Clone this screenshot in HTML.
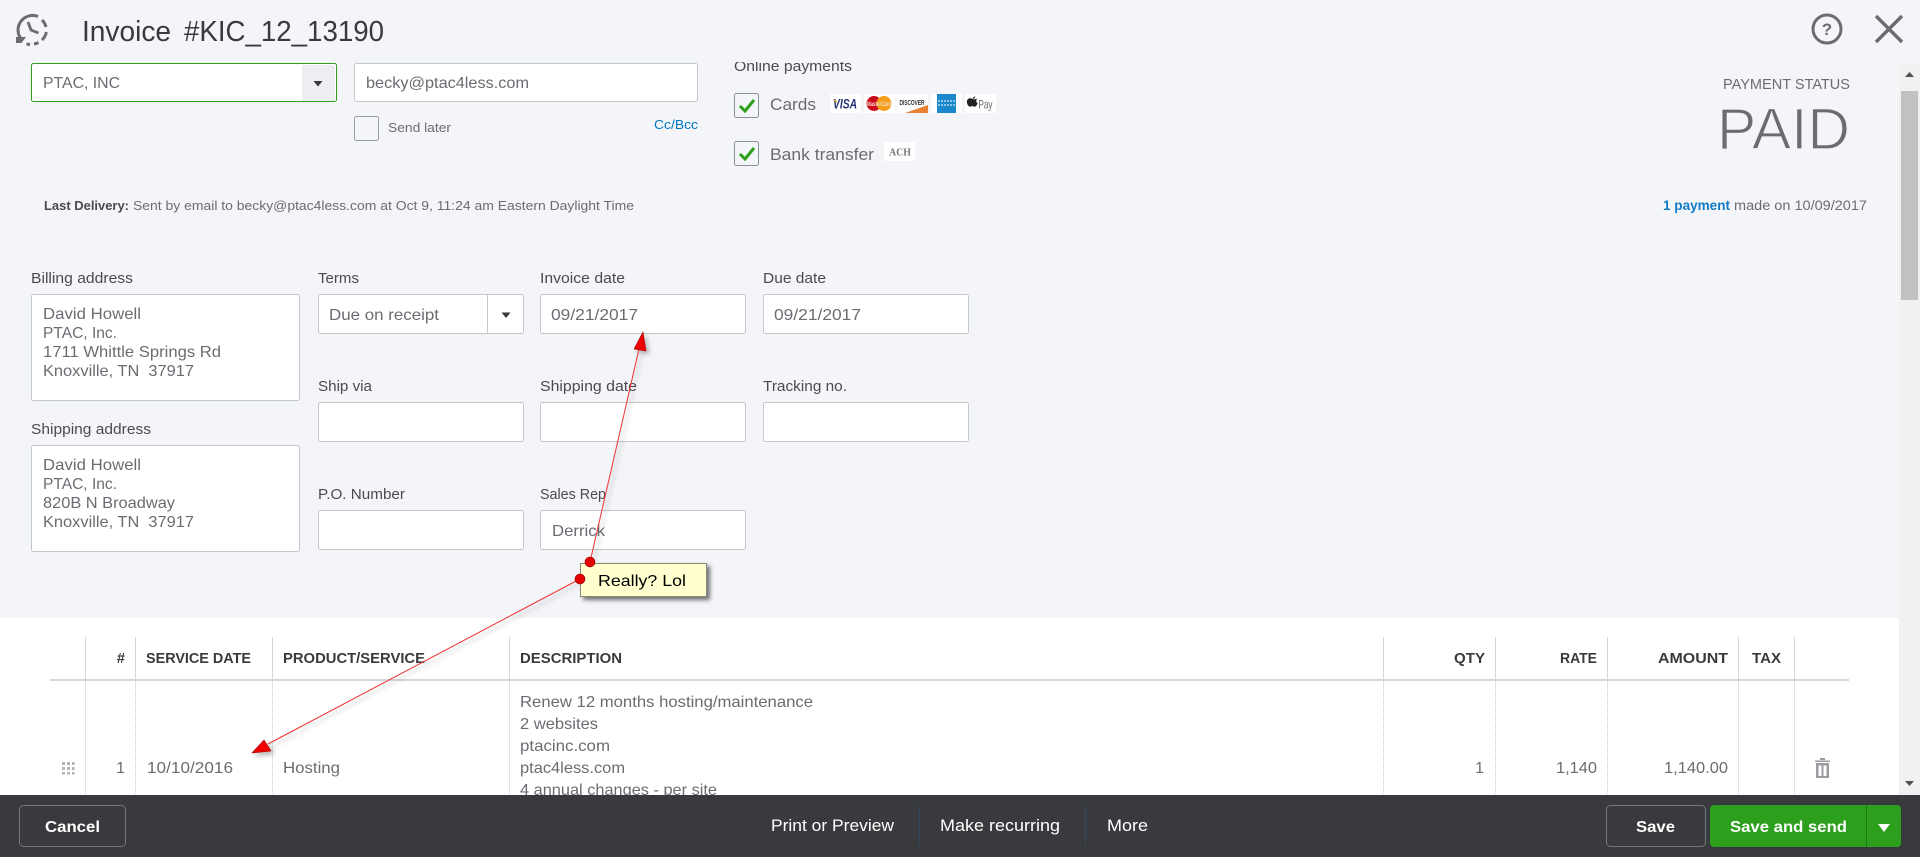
<!DOCTYPE html>
<html>
<head>
<meta charset="utf-8">
<title>Invoice</title>
<style>
html,body{margin:0;padding:0;width:1920px;height:857px;overflow:hidden;background:#f4f5f8}
svg{display:block}
text{font-family:"Liberation Sans",sans-serif;fill:#6b6c72;font-size:16px}
.l{fill:#4a4b50;font-size:14.5px}
.h{fill:#393a3d;font-size:14.5px;font-weight:bold}
.v{fill:#6b6c72;font-size:16px}
.box{fill:#fff;stroke:#c4c7cc;stroke-width:1}
</style>
</head>
<body>
<svg width="1920" height="857" viewBox="0 0 1920 857" xmlns="http://www.w3.org/2000/svg">
<defs>
<filter id="sh" x="-30%" y="-30%" width="170%" height="170%"><feDropShadow dx="3" dy="3" stdDeviation="2" flood-color="#000" flood-opacity=".55"/></filter>
<filter id="sl" x="-20%" y="-20%" width="140%" height="140%"><feDropShadow dx="3" dy="3" stdDeviation="2.5" flood-color="#000" flood-opacity=".28"/></filter>
</defs>
<rect width="1920" height="857" fill="#f4f5f8"/>

<!-- online payments (clipped by header) -->
<text x="734" y="71" style="font-size:15px;fill:#4a4b50" textLength="118" lengthAdjust="spacingAndGlyphs">Online payments</text>
<rect x="0" y="0" width="1920" height="62" fill="#f4f5f8"/>

<!-- header -->
<g fill="none" stroke="#6b6c72" stroke-width="3">
<path d="M20.5 38A14.5 14.5 0 0 1 38 16.5"/>
<path d="M42 20A14.5 14.5 0 0 1 46 27"/>
<path d="M46.300 32A14.500 14.500 0 0 1 42 40"/>
<path d="M38.500 42.500A14.500 14.500 0 0 1 34 44"/>
<path d="M30 44.500L26.500 44"/>
<path d="M28 22L31 30L38.500 33" stroke-width="2.800"/>
</g>
<path d="M16 37H26L21.500 43H16Z" fill="#6b6c72"/>
<text x="82" y="41" style="font-size:29px;fill:#393a3d" textLength="89" lengthAdjust="spacingAndGlyphs">Invoice</text>
<text x="184" y="41" style="font-size:29px;fill:#393a3d" textLength="200" lengthAdjust="spacingAndGlyphs">#KIC_12_13190</text>
<circle cx="1827" cy="29" r="14" fill="none" stroke="#6b6c72" stroke-width="3"/>
<text x="1827" y="35" text-anchor="middle" style="font-size:17px;font-weight:bold;fill:#6b6c72">?</text>
<path d="M1876 16L1902 42M1902 16L1876 42" stroke="#6b6c72" stroke-width="3.400" fill="none"/>

<!-- customer -->
<rect x="31.500" y="63.500" width="305" height="38" rx="2" fill="#fff" stroke="#2ca01c"/>
<rect x="302" y="65" width="33" height="36" fill="#eceef1"/>
<path d="M313.500 81H322.500L318 86.500Z" fill="#393a3d"/>
<text x="43" y="88" class="v" textLength="77" lengthAdjust="spacingAndGlyphs">PTAC, INC</text>
<rect x="354.500" y="63.500" width="343" height="38" rx="2" class="box"/>
<text x="366" y="88" class="v" textLength="163" lengthAdjust="spacingAndGlyphs">becky@ptac4less.com</text>
<rect x="354.500" y="116.500" width="24" height="24" rx="2" fill="#f4f5f8" stroke="#9a9da3"/>
<text x="388" y="132" style="font-size:13px" textLength="63" lengthAdjust="spacingAndGlyphs">Send later</text>
<text x="654" y="129" style="font-size:13px;fill:#0077c5" textLength="44" lengthAdjust="spacingAndGlyphs">Cc/Bcc</text>

<!-- payment options -->
<rect x="734.500" y="93.500" width="24" height="24" rx="2" fill="#f4f5f8" stroke="#8d9096"/>
<path d="M740 106L745 111L754 100" fill="none" stroke="#2ca01c" stroke-width="3"/>
<text x="770" y="110" style="font-size:17px" textLength="46" lengthAdjust="spacingAndGlyphs">Cards</text>
<rect x="734.500" y="141.500" width="24" height="24" rx="2" fill="#f4f5f8" stroke="#8d9096"/>
<path d="M740 154L745 159L754 148" fill="none" stroke="#2ca01c" stroke-width="3"/>
<text x="770" y="160" style="font-size:17px" textLength="104" lengthAdjust="spacingAndGlyphs">Bank transfer</text>

<!-- cards -->
<rect x="830" y="94" width="31" height="19" fill="#fff"/>
<text x="833" y="108.500" style="font-size:13.500px;font-weight:bold;font-style:italic;fill:#26337a" textLength="24" lengthAdjust="spacingAndGlyphs">VISA</text>
<path d="M833 100H836L837 103Z" fill="#e8a020"/>
<rect x="864" y="94" width="31" height="19" fill="#fff"/>
<circle cx="874" cy="103.500" r="7.500" fill="#cc0a1e"/><circle cx="884" cy="103.500" r="7.500" fill="#f79e1b"/>
<text x="867" y="106" style="font-size:6px;font-weight:bold;fill:#f3dcc8" textLength="24" lengthAdjust="spacingAndGlyphs">MasterCard</text>
<rect x="897" y="94" width="31" height="19" fill="#fff"/>
<text x="899.500" y="105" style="font-size:7px;font-weight:bold;fill:#333" textLength="25" lengthAdjust="spacingAndGlyphs">DISCOVER</text>
<path d="M905 113L928 105V113Z" fill="#e97f30"/>
<rect x="931" y="94" width="31" height="19" fill="#fff"/>
<rect x="937" y="94" width="19" height="19" fill="#1b87cd"/>
<path d="M938 101H955M938 105H955" stroke="#8cc4e8" stroke-width="2" stroke-dasharray="2 1" fill="none"/>
<rect x="965" y="94" width="31" height="19" fill="#fff"/>
<path d="M973.500 99.500c1.800 0 2.400-1.200 3.600-.6-1.200 1.200-1.200 3.600.6 4.200-.6 1.800-1.800 3.600-3 3.600s-1.200-.6-2.400-.6-1.200.6-2.400.6-3-2.400-3-4.800 1.800-3.600 3-3.600 1.800.6 3.600.6zM975.300 96.500c0 1.200-1.200 2.400-2.400 2.400 0-1.200 1.200-2.400 2.400-2.400z" fill="#222"/>
<text x="978.500" y="108.500" style="font-size:12px;fill:#666" textLength="14" lengthAdjust="spacingAndGlyphs">Pay</text>
<rect x="884" y="142" width="31" height="19" fill="#fff"/>
<text x="889" y="155.500" style="font-family:'Liberation Serif',serif;font-size:10.500px;font-weight:bold;fill:#777" textLength="22" lengthAdjust="spacingAndGlyphs">ACH</text>

<!-- payment status -->
<text x="1723" y="89" style="font-size:15px;fill:#6b6c72" textLength="127" lengthAdjust="spacingAndGlyphs">PAYMENT STATUS</text>
<text x="1717" y="149" style="font-size:58px;fill:#6b6c72;stroke:#f4f5f8;stroke-width:1.200px" textLength="133" lengthAdjust="spacingAndGlyphs">PAID</text>

<!-- delivery -->
<text x="44" y="210" style="font-size:13px;font-weight:bold;fill:#4a4b50" textLength="85" lengthAdjust="spacingAndGlyphs">Last Delivery:</text>
<text x="133" y="210" style="font-size:13px" textLength="501" lengthAdjust="spacingAndGlyphs">Sent by email to becky@ptac4less.com at Oct 9, 11:24 am Eastern Daylight Time</text>
<text x="1663" y="210" style="font-size:13.500px;font-weight:bold;fill:#0f7bc4" textLength="67" lengthAdjust="spacingAndGlyphs">1 payment</text>
<text x="1734" y="210" style="font-size:13.500px" textLength="133" lengthAdjust="spacingAndGlyphs">made on 10/09/2017</text>

<!-- address column -->
<text x="31" y="283" class="l" textLength="102" lengthAdjust="spacingAndGlyphs">Billing address</text>
<rect x="31.500" y="294.500" width="268" height="106" rx="2" class="box"/>
<text x="43" y="319" class="v" textLength="98" lengthAdjust="spacingAndGlyphs">David Howell</text>
<text x="43" y="338" class="v" textLength="74" lengthAdjust="spacingAndGlyphs">PTAC, Inc.</text>
<text x="43" y="357" class="v" textLength="178" lengthAdjust="spacingAndGlyphs">1711 Whittle Springs Rd</text>
<text x="43" y="376" class="v" textLength="151" lengthAdjust="spacingAndGlyphs">Knoxville, TN&#160;&#160;37917</text>
<text x="31" y="434" class="l" textLength="120" lengthAdjust="spacingAndGlyphs">Shipping address</text>
<rect x="31.500" y="445.500" width="268" height="106" rx="2" class="box"/>
<text x="43" y="470" class="v" textLength="98" lengthAdjust="spacingAndGlyphs">David Howell</text>
<text x="43" y="489" class="v" textLength="74" lengthAdjust="spacingAndGlyphs">PTAC, Inc.</text>
<text x="43" y="508" class="v" textLength="132" lengthAdjust="spacingAndGlyphs">820B N Broadway</text>
<text x="43" y="527" class="v" textLength="151" lengthAdjust="spacingAndGlyphs">Knoxville, TN&#160;&#160;37917</text>

<!-- form fields -->
<text x="318" y="283" class="l" textLength="41" lengthAdjust="spacingAndGlyphs">Terms</text>
<rect x="318.500" y="294.500" width="205" height="39" rx="2" class="box"/>
<path d="M487.500 295V333" stroke="#c4c7cc"/>
<path d="M501.500 312.500H510.500L506 318Z" fill="#393a3d"/>
<text x="329" y="320" class="v" textLength="110" lengthAdjust="spacingAndGlyphs">Due on receipt</text>

<text x="540" y="283" class="l" textLength="85" lengthAdjust="spacingAndGlyphs">Invoice date</text>
<rect x="540.500" y="294.500" width="205" height="39" rx="2" class="box"/>
<text x="551" y="320" class="v" textLength="87" lengthAdjust="spacingAndGlyphs">09/21/2017</text>

<text x="763" y="283" class="l" textLength="63" lengthAdjust="spacingAndGlyphs">Due date</text>
<rect x="763.500" y="294.500" width="205" height="39" rx="2" class="box"/>
<text x="774" y="320" class="v" textLength="87" lengthAdjust="spacingAndGlyphs">09/21/2017</text>

<text x="318" y="391" class="l" textLength="54" lengthAdjust="spacingAndGlyphs">Ship via</text>
<rect x="318.500" y="402.500" width="205" height="39" rx="2" class="box"/>
<text x="540" y="391" class="l" textLength="97" lengthAdjust="spacingAndGlyphs">Shipping date</text>
<rect x="540.500" y="402.500" width="205" height="39" rx="2" class="box"/>
<text x="763" y="391" class="l" textLength="84" lengthAdjust="spacingAndGlyphs">Tracking no.</text>
<rect x="763.500" y="402.500" width="205" height="39" rx="2" class="box"/>

<text x="318" y="499" class="l" textLength="87" lengthAdjust="spacingAndGlyphs">P.O. Number</text>
<rect x="318.500" y="510.500" width="205" height="39" rx="2" class="box"/>
<text x="540" y="499" class="l" textLength="66" lengthAdjust="spacingAndGlyphs">Sales Rep</text>
<rect x="540.500" y="510.500" width="205" height="39" rx="2" class="box"/>
<text x="552" y="536" class="v" textLength="53" lengthAdjust="spacingAndGlyphs">Derrick</text>

<!-- table -->
<rect x="0" y="618" width="1899" height="180" fill="#fff"/>
<g stroke="#d4d7dc">
<path d="M85.500 637V680M135.500 637V680M272.500 637V680M509.500 637V680M1383.500 637V680M1495.500 637V680M1607.500 637V680M1738.500 637V680M1794.500 637V680"/>
</g>
<g stroke="#c4c7cc" stroke-dasharray="1 1">
<path d="M85.500 681V796M135.500 681V796M272.500 681V796M509.500 681V796M1383.500 681V796M1495.500 681V796M1607.500 681V796M1738.500 681V796M1794.500 681V796"/>
</g>
<rect x="50" y="679" width="1799" height="2" fill="#d4d7dc"/>
<text x="125" y="663" class="h" text-anchor="end">#</text>
<text x="146" y="663" class="h" textLength="105" lengthAdjust="spacingAndGlyphs">SERVICE DATE</text>
<text x="283" y="663" class="h" textLength="142" lengthAdjust="spacingAndGlyphs">PRODUCT/SERVICE</text>
<text x="520" y="663" class="h" textLength="102" lengthAdjust="spacingAndGlyphs">DESCRIPTION</text>
<text x="1454" y="663" class="h" textLength="31" lengthAdjust="spacingAndGlyphs">QTY</text>
<text x="1560" y="663" class="h" textLength="37" lengthAdjust="spacingAndGlyphs">RATE</text>
<text x="1658" y="663" class="h" textLength="70" lengthAdjust="spacingAndGlyphs">AMOUNT</text>
<text x="1752" y="663" class="h" textLength="29" lengthAdjust="spacingAndGlyphs">TAX</text>

<g fill="#b0b3b8">
<rect x="62" y="762" width="3" height="3"/><rect x="67" y="762" width="3" height="3"/><rect x="72" y="762" width="2.500" height="3"/>
<rect x="62" y="767" width="3" height="3"/><rect x="67" y="767" width="3" height="3"/><rect x="72" y="767" width="2.500" height="3"/>
<rect x="62" y="772" width="3" height="2.500"/><rect x="67" y="772" width="3" height="2.500"/><rect x="72" y="772" width="2.500" height="2.500"/>
</g>
<text x="125" y="773" class="v" text-anchor="end">1</text>
<text x="147" y="773" class="v" textLength="86" lengthAdjust="spacingAndGlyphs">10/10/2016</text>
<text x="283" y="773" class="v" textLength="57" lengthAdjust="spacingAndGlyphs">Hosting</text>
<text x="520" y="707" class="v" textLength="293" lengthAdjust="spacingAndGlyphs">Renew 12 months hosting/maintenance</text>
<text x="520" y="729" class="v" textLength="78" lengthAdjust="spacingAndGlyphs">2 websites</text>
<text x="520" y="751" class="v" textLength="90" lengthAdjust="spacingAndGlyphs">ptacinc.com</text>
<text x="520" y="773" class="v" textLength="105" lengthAdjust="spacingAndGlyphs">ptac4less.com</text>
<text x="520" y="795" class="v" textLength="197" lengthAdjust="spacingAndGlyphs">4 annual changes - per site</text>
<text x="1484" y="773" class="v" text-anchor="end">1</text>
<text x="1556" y="773" class="v" textLength="41" lengthAdjust="spacingAndGlyphs">1,140</text>
<text x="1664" y="773" class="v" textLength="64" lengthAdjust="spacingAndGlyphs">1,140.00</text>
<path d="M1815 760.500H1830V762H1815ZM1820 758H1825V760H1820Z" fill="#9a9ca0"/>
<path d="M1816 763H1829V778H1816ZM1818.500 765.500V776H1821.500V765.500ZM1823.500 765.500V776H1826.500V765.500Z" fill="#9a9ca0" fill-rule="evenodd"/>

<!-- scrollbar -->
<rect x="1899" y="63" width="21" height="735" fill="#f1f1f1"/>
<rect x="1901" y="91" width="17" height="209" fill="#c1c1c1"/>
<path d="M1905 77H1914L1909.500 72Z" fill="#505050"/>
<path d="M1905 781H1914L1909.500 786Z" fill="#505050"/>

<!-- annotations -->
<g filter="url(#sl)">
<path d="M590 562L639 349" stroke="#f03030" stroke-width="1" fill="none"/>
<path d="M643 332L634 349L646 351Z" fill="#f00000" stroke="#a00000" stroke-width=".6"/>
<path d="M578 580L268 744" stroke="#f03030" stroke-width="1" fill="none"/>
<path d="M252 753L264 740L271 751Z" fill="#f00000" stroke="#a00000" stroke-width=".6"/>
</g>
<rect x="580.500" y="563.500" width="126" height="33" fill="#ffffd0" stroke="#8a8a78" filter="url(#sh)"/>
<text x="598" y="586" style="font-size:16px;fill:#000" textLength="88" lengthAdjust="spacingAndGlyphs">Really? Lol</text>
<circle cx="590" cy="562" r="5" fill="#e60000" stroke="#900" stroke-width=".6"/>
<circle cx="580" cy="579" r="5" fill="#e60000" stroke="#900" stroke-width=".6"/>

<!-- footer -->
<rect x="0" y="795" width="1920" height="62" fill="#393a3d"/>
<rect x="19.500" y="805.500" width="106" height="41" rx="4" fill="none" stroke="#74767b"/>
<text x="45" y="832" style="font-size:16px;font-weight:bold;fill:#fff" textLength="55" lengthAdjust="spacingAndGlyphs">Cancel</text>
<text x="771" y="831" style="font-size:17px;fill:#fff" textLength="123" lengthAdjust="spacingAndGlyphs">Print or Preview</text>
<path d="M919.500 805V845M1085.500 805V845" stroke="#2e4a62"/>
<text x="940" y="831" style="font-size:17px;fill:#fff" textLength="120" lengthAdjust="spacingAndGlyphs">Make recurring</text>
<text x="1107" y="831" style="font-size:17px;fill:#fff" textLength="41" lengthAdjust="spacingAndGlyphs">More</text>
<rect x="1606.500" y="805.500" width="99" height="41" rx="4" fill="none" stroke="#74767b"/>
<text x="1636" y="832" style="font-size:16px;font-weight:bold;fill:#fff" textLength="39" lengthAdjust="spacingAndGlyphs">Save</text>
<rect x="1710" y="805" width="191" height="42" rx="4" fill="#2ca01c"/>
<path d="M1866.500 805V847" stroke="#1c7a10"/>
<text x="1730" y="832" style="font-size:16px;font-weight:bold;fill:#fff" textLength="117" lengthAdjust="spacingAndGlyphs">Save and send</text>
<path d="M1878 824H1890L1884 832Z" fill="#fff"/>
</svg>
</body>
</html>
